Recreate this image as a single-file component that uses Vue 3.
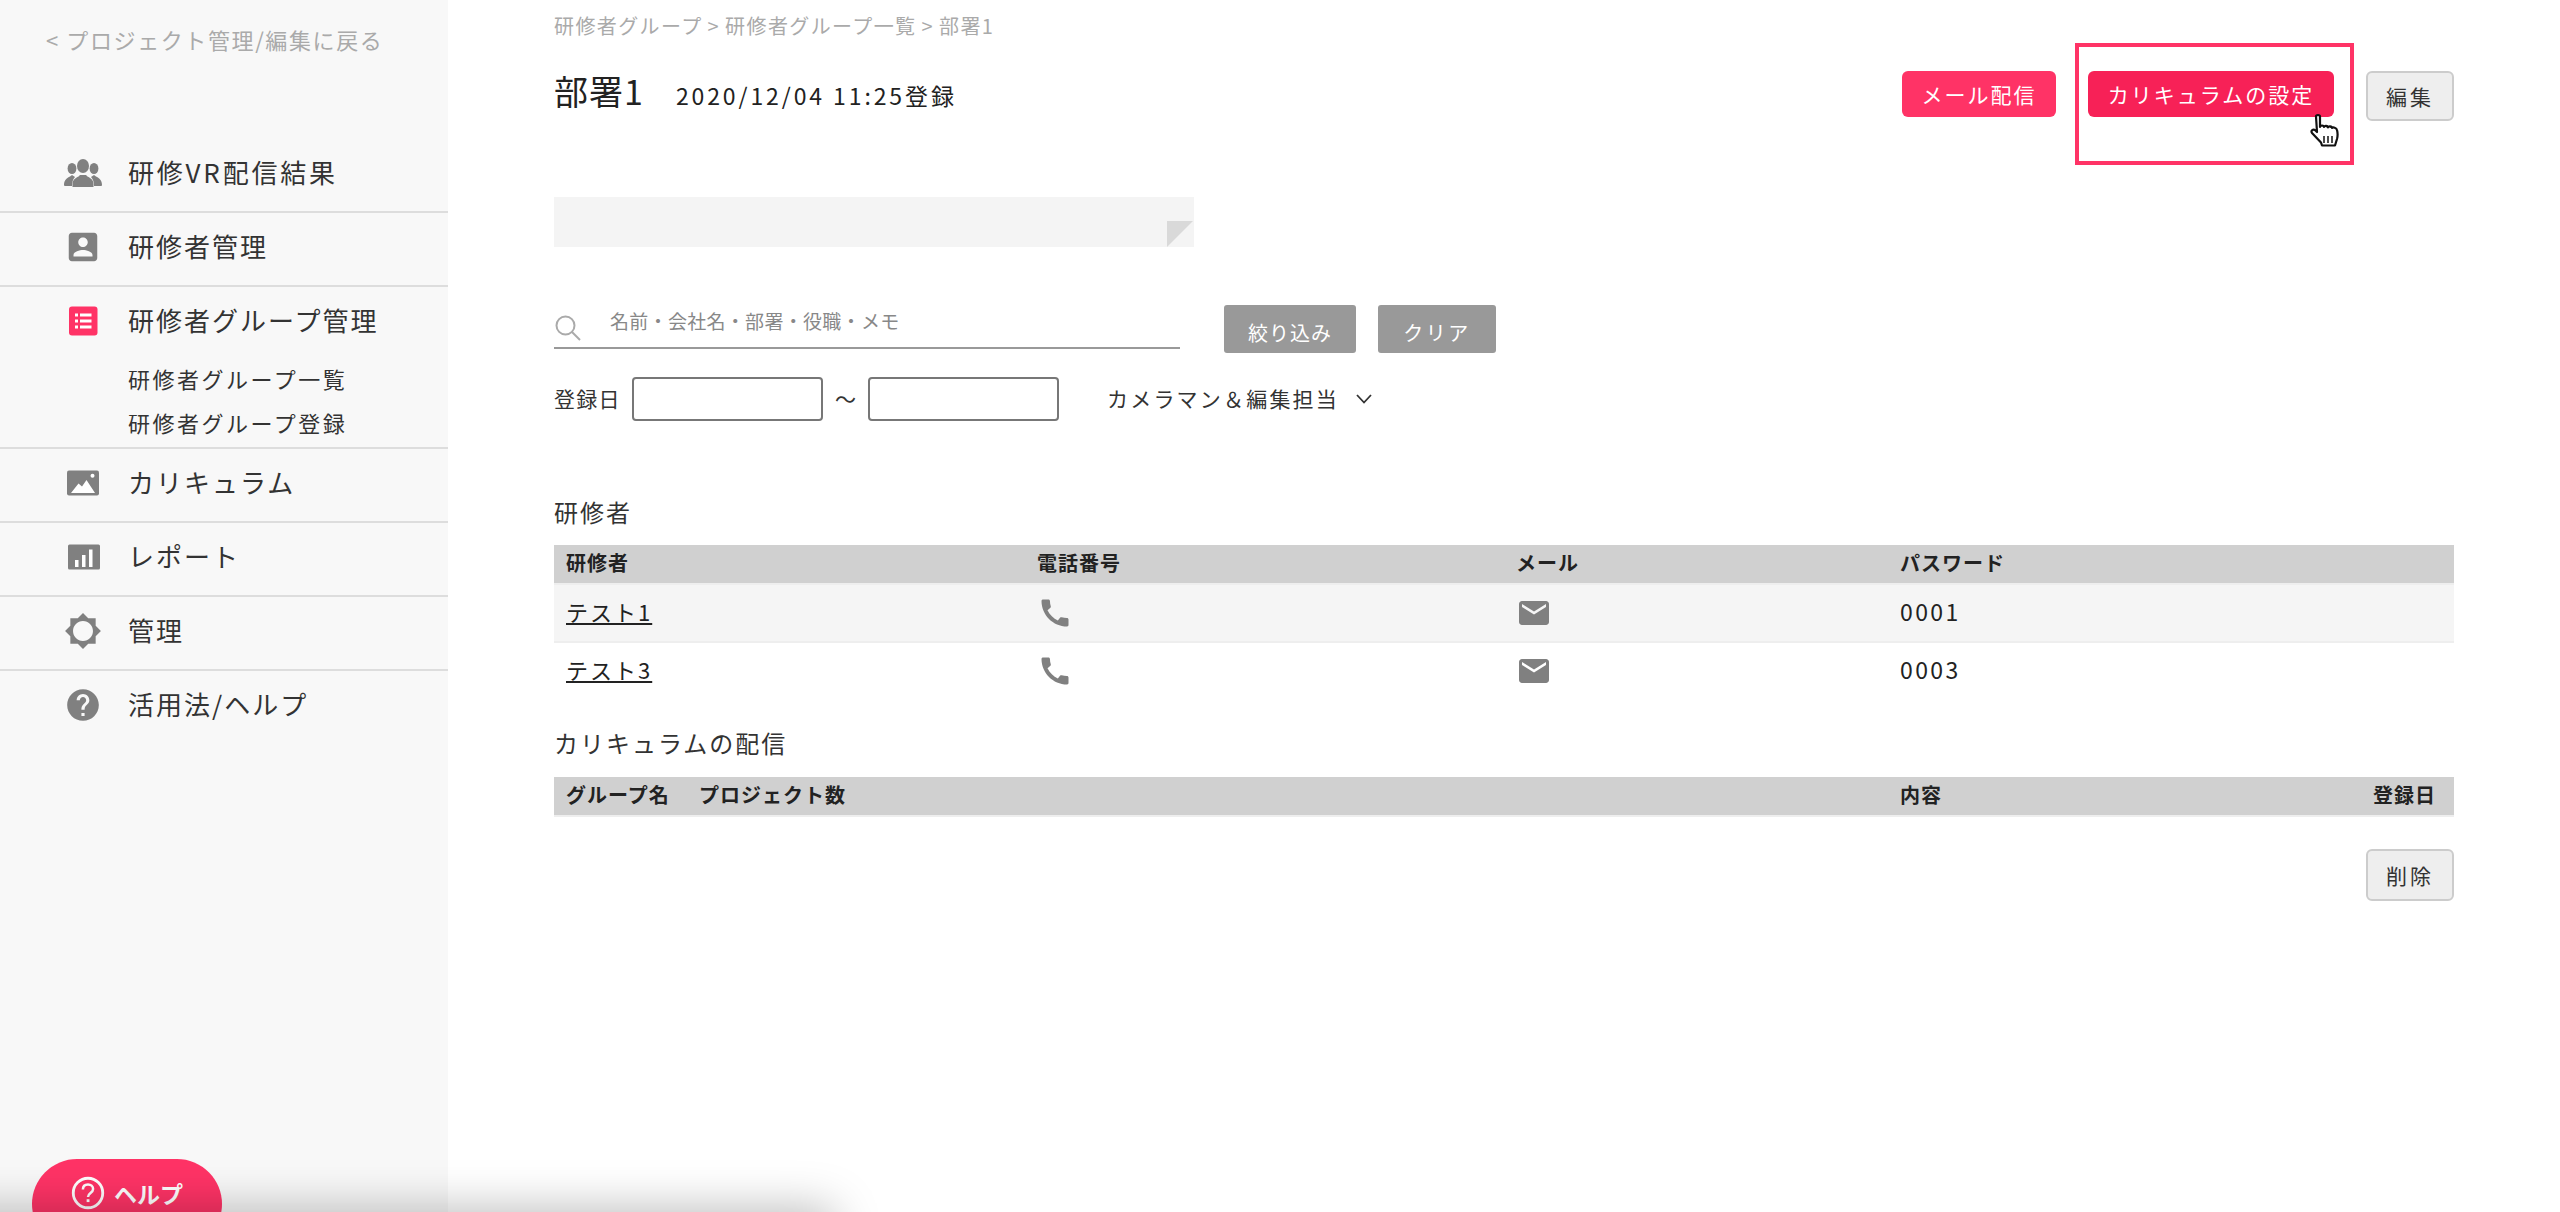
<script setup>
const navItems = [
  { label: '研修VR配信結果', icon: 'group', wide: true },
  { label: '研修者管理', icon: 'account' },
  { label: '研修者グループ管理', icon: 'list', subs: ['研修者グループ一覧', '研修者グループ登録'] },
  { label: 'カリキュラム', icon: 'image' },
  { label: 'レポート', icon: 'report' },
  { label: '管理', icon: 'gear' },
  { label: '活用法/ヘルプ', icon: 'help', last: true }
]
const trainees = [
  { name: 'テスト1', pass: '0001' },
  { name: 'テスト3', pass: '0003' }
]
</script>

<template>
  <div class="page">
    <aside class="side">
      <div class="back">&lt; プロジェクト管理/編集に戻る</div>
      <nav class="nav">
        <div v-for="item in navItems" :key="item.label" class="nav-item" :class="{ last: item.last }">
          <div class="nav-row">
            <svg v-if="item.icon === 'group'" class="nav-icon" viewBox="0 0 38 38">
              <g fill="#808080">
                <ellipse cx="8" cy="14.500" rx="4.400" ry="5.500" />
                <ellipse cx="30" cy="14.500" rx="4.400" ry="5.500" />
                <path d="M0 31c0-5 3-7 6-8.500l2-1.500 3 2c-2 2-3 5-3 9H1.500C.5 32 0 31.800 0 31zM38 31c0-5-3-7-6-8.500l-2-1.500-3 2c2 2 3 5 3 9h6.500c1 0 1.500-.2 1.500-1z" />
                <ellipse cx="19" cy="12" rx="6" ry="7" />
                <path d="M8.500 33v-3c0-4 3-6 6-7.500l1.500-1.500h6l1.500 1.500c3 1.500 6 3.500 6 7.500v3z" />
              </g>
            </svg>
            <svg v-else-if="item.icon === 'account'" class="nav-icon" viewBox="0 0 24 24">
              <path fill="#808080" d="M3 5v14c0 1.100.89 2 2 2h14c1.100 0 2-.9 2-2V5c0-1.100-.9-2-2-2H5c-1.110 0-2 .9-2 2zm12 4c0 1.660-1.340 3-3 3s-3-1.340-3-3 1.340-3 3-3 3 1.340 3 3zm-9 8c0-2 4-3.100 6-3.100s6 1.100 6 3.100v1H6v-1z" />
            </svg>
            <svg v-else-if="item.icon === 'list'" class="nav-icon" viewBox="0 0 38 38">
              <rect x="5" y="4.500" width="28.500" height="29" rx="3" fill="#ff3366" />
              <g fill="#fff">
                <rect x="11" y="11.500" width="3" height="3" />
                <rect x="16" y="11.500" width="11.500" height="3" />
                <rect x="11" y="17.500" width="3" height="3" />
                <rect x="16" y="17.500" width="11.500" height="3" />
                <rect x="11" y="23.500" width="3" height="3" />
                <rect x="16" y="23.500" width="11.500" height="3" />
              </g>
            </svg>
            <svg v-else-if="item.icon === 'image'" class="nav-icon" viewBox="0 0 38 38">
              <rect x="3" y="6.500" width="32" height="25" rx="2" fill="#808080" />
              <circle cx="28.500" cy="11.800" r="2" fill="#fff" />
              <path fill="#fff" d="M7 29l7.500-9.500 3.500 3 4.500-6.500L31 29z" />
            </svg>
            <svg v-else-if="item.icon === 'report'" class="nav-icon" viewBox="0 0 38 38">
              <rect x="4" y="6.500" width="32" height="25" rx="1.500" fill="#808080" />
              <g fill="#fff">
                <rect x="11" y="22" width="3.500" height="7" />
                <rect x="18" y="17" width="3.500" height="12" />
                <rect x="25" y="11.500" width="3.500" height="17.500" />
              </g>
            </svg>
            <svg v-else-if="item.icon === 'gear'" class="nav-icon" viewBox="0 0 24 24">
              <path fill="#808080" fill-rule="evenodd" d="M20 8.690V4h-4.690L12 .69 8.690 4H4v4.690L.69 12 4 15.310V20h4.690L12 23.310 15.310 20H20v-4.690L23.310 12 20 8.690zM12 18.300c-3.480 0-6.300-2.820-6.300-6.300s2.820-6.300 6.300-6.300 6.300 2.820 6.300 6.300-2.820 6.300-6.300 6.300z" />
            </svg>
            <svg v-else class="nav-icon" viewBox="0 0 24 24">
              <path fill="#808080" d="M12 2C6.480 2 2 6.480 2 12s4.480 10 10 10 10-4.480 10-10S17.520 2 12 2zm1 17h-2v-2h2v2zm2.070-7.750l-.9.920C13.450 12.900 13 13.500 13 15h-2v-.5c0-1.100.45-2.100 1.170-2.830l1.240-1.260c.37-.36.59-.86.59-1.410 0-1.100-.9-2-2-2s-2 .9-2 2H8c0-2.210 1.790-4 4-4s4 1.790 4 4c0 .88-.36 1.680-.93 2.250z" />
            </svg>
            <span class="nav-label" :class="{ wide: item.wide }">{{ item.label }}</span>
          </div>
          <div v-for="s in item.subs" :key="s" class="nav-sub">{{ s }}</div>
        </div>
      </nav>
      <button class="help">
        <svg class="help-icon" viewBox="0 0 30 30">
          <circle cx="15" cy="15" r="13" fill="none" stroke="#fff" stroke-width="2.500" />
          <path d="M10.500 12c0-3 2-4.500 4.500-4.500s4.500 1.500 4.500 4c0 3.500-4.500 3.500-4.500 7" fill="none" stroke="#fff" stroke-width="2.200" />
          <rect x="13.800" y="20.500" width="2.500" height="2.500" fill="#fff" />
        </svg>
        <span>ヘルプ</span>
      </button>
    </aside>

    <main class="main">
      <div class="crumb">研修者グループ<span class="sep">&gt;</span>研修者グループ一覧<span class="sep">&gt;</span>部署1</div>

      <header class="head">
        <div class="title-wrap">
          <h1 class="title">部署1</h1>
          <span class="date">2020/12/04 11:25登録</span>
        </div>
        <div class="actions">
          <button class="btn pink mail-btn">メール配信</button>
          <div class="focus">
            <button class="btn pink-dark">カリキュラムの設定</button>
            <svg class="hand" viewBox="0 0 32 34">
              <path fill="#fff" stroke="#111" stroke-width="2.200" stroke-linejoin="round" d="M6 2.500C6 .5 10 .5 10 2.500V13c0-2 4-2 4 0 0-1.500 4-1.500 4 .5 0-1.500 4-1.500 4 .5 1-1 4.500-.5 5 2 .8 3 .8 6 0 9l-2 6.500H12l-1-3L2 19c-1.500-2.500 1-4.500 3.500-2.500L7 18z" />
              <path stroke="#111" stroke-width="1.500" d="M14 22v7M18 22v7M22 22v7" />
            </svg>
          </div>
          <button class="btn ghost edit-btn">編集</button>
        </div>
      </header>

      <div class="note"><div class="fold"></div></div>

      <div class="search-row">
        <div class="search">
          <svg class="search-icon" viewBox="0 0 28 26">
            <circle cx="11.500" cy="10.500" r="9" fill="none" stroke="#aaa" stroke-width="2" />
            <path d="M18 17l8 8" stroke="#aaa" stroke-width="2" />
          </svg>
          <span class="placeholder">名前・会社名・部署・役職・メモ</span>
        </div>
        <button class="btn grey narrow-a">絞り込み</button>
        <button class="btn grey narrow-b">クリア</button>
      </div>

      <div class="date-row">
        <span class="date-label">登録日</span>
        <input class="date-input" type="text" />
        <span class="tilde">～</span>
        <input class="date-input" type="text" />
        <span class="staff">カメラマン＆編集担当</span>
        <svg class="chev" viewBox="0 0 16 10">
          <path d="M1 1l7 7.500L15 1" fill="none" stroke="#333" stroke-width="1.800" />
        </svg>
      </div>

      <h2 class="sec first">研修者</h2>
      <div class="grid thead t1">
        <div>研修者</div><div>電話番号</div><div>メール</div><div>パスワード</div>
      </div>
      <div v-for="(t, i) in trainees" :key="t.name" class="grid trow t1" :class="{ odd: i === 0 }">
        <div class="tcell"><a class="link">{{ t.name }}</a></div>
        <div class="icell">
          <svg class="cell-icon" viewBox="0 0 24 24">
            <path fill="#808080" d="M20.010 15.380c-1.230 0-2.420-.2-3.530-.56-.35-.12-.74-.03-1.010.24l-1.570 1.970c-2.830-1.350-5.480-3.900-6.890-6.830l1.950-1.660c.27-.28.35-.67.24-1.020-.37-1.110-.56-2.300-.56-3.530 0-.54-.45-.99-.99-.99H4.190C3.650 3 3 3.240 3 3.990 3 13.280 10.730 21 20.010 21c.71 0 .99-.63.99-1.180v-3.450c0-.54-.45-.99-.98-.99z" />
          </svg>
        </div>
        <div class="icell">
          <svg class="cell-icon" viewBox="0 0 24 24">
            <path fill="#808080" d="M20 4H4c-1.100 0-1.990.9-1.990 2L2 18c0 1.100.9 2 2 2h16c1.100 0 2-.9 2-2V6c0-1.100-.9-2-2-2zm0 4l-8 5-8-5V6l8 5 8-5v2z" />
          </svg>
        </div>
        <div class="tcell pass">{{ t.pass }}</div>
      </div>

      <h2 class="sec second">カリキュラムの配信</h2>
      <div class="grid thead t2">
        <div>グループ名</div><div>プロジェクト数</div><div>内容</div><div class="right">登録日</div>
      </div>

      <div class="del-row">
        <button class="btn ghost del-btn">削除</button>
      </div>
    </main>

    <div class="edge"></div>
  </div>
</template>

<style>
html, body { margin: 0; background: #fff; overflow: hidden; }
</style>

<style scoped>
.page {
  position: relative;
  display: flex;
  width: 2560px;
  height: 1212px;
  overflow: hidden;
  background: #fff;
  color: #333;
  font-family: "Noto Sans CJK JP", "Noto Sans", sans-serif;
}
.side {
  position: relative;
  flex: 0 0 448px;
  background: #f8f8f8;
}
.back {
  padding: 24px 0 0 46px;
  height: 34px;
  line-height: 30px;
  font-size: 22px;
  letter-spacing: 1.600px;
  color: #aaa;
}
.nav { margin-top: 81px; }
.nav-item {
  padding-bottom: 4px;
  border-bottom: 2px solid #ddd;
}
.nav-item.last { border-bottom: 0; }
.nav-row {
  display: flex;
  align-items: center;
  gap: 26px;
  height: 68px;
  padding-left: 64px;
  font-size: 26px;
  letter-spacing: 2px;
}
.nav-icon { width: 38px; height: 38px; flex: none; }
.nav-label { margin-bottom: 4px; }
.nav-label.wide { letter-spacing: 2.800px; }
.nav-sub {
  height: 44px;
  line-height: 40px;
  padding-left: 128px;
  font-size: 22px;
  letter-spacing: 2.500px;
}
.nav-row + .nav-sub { margin-top: 3px; }
.nav-sub:last-child { margin-bottom: -3px; }
.help {
  position: absolute;
  left: 32px;
  top: 1159px;
  width: 190px;
  height: 90px;
  padding: 0 0 22px;
  border: 0;
  border-radius: 45px;
  background: #ff3366;
  color: #fff;
  font: 700 23px "Noto Sans CJK JP", sans-serif;
  display: flex;
  align-items: center;
  justify-content: center;
  gap: 9px;
}
.help-icon { width: 34px; height: 34px; }
.main {
  flex: 1;
  padding: 14px 106px 0;
  min-width: 0;
}
.crumb {
  font-size: 20px;
  line-height: 24px;
  letter-spacing: 1.400px;
  color: #aaa;
}
.sep { margin: 0 5px; }
.head {
  display: flex;
  justify-content: space-between;
  margin-top: 33px;
  height: 50px;
}
.title-wrap { display: flex; align-items: baseline; height: 46px; margin-top: -3px; }
.title {
  margin: 0;
  font-size: 34px;
  font-weight: 400;
  line-height: 46px;
  letter-spacing: 1px;
  color: #222;
}
.date {
  margin-left: 32px;
  font-size: 23px;
  letter-spacing: 2.900px;
  color: #222;
}
.actions { display: flex; align-items: flex-start; }
.btn {
  box-sizing: border-box;
  border: 0;
  padding: 0;
  font-family: inherit;
  display: block;
  text-align: center;
}
.pink, .pink-dark {
  height: 46px;
  border-radius: 6px;
  color: #fff;
  font-size: 21px;
  letter-spacing: 2px;
}
.pink { background: #ff3366; }
.pink-dark { background: #f72157; width: 246px; position: relative; }
.mail-btn { width: 154px; margin-right: 32px; }
.focus { position: relative; margin-right: 32px; }
.focus::before {
  content: "";
  position: absolute;
  left: -13px;
  top: -28px;
  width: 279px;
  height: 122px;
  box-sizing: border-box;
  border: 4px solid #ff3366;
}
.hand {
  position: absolute;
  left: 222px;
  top: 42px;
  width: 32px;
  height: 36px;
}
.ghost {
  width: 88px;
  background: #eee;
  border: 2px solid #ccc;
  border-radius: 6px;
  color: #333;
  font-size: 21px;
  letter-spacing: 3px;
}
.edit-btn { height: 50px; }
.note {
  position: relative;
  margin-top: 76px;
  width: 640px;
  height: 50px;
  background: #f4f4f4;
}
.fold {
  position: absolute;
  right: 1px;
  bottom: 0;
  width: 26px;
  height: 26px;
  background: #d9d9d9;
  clip-path: polygon(0 0, 100% 0, 0 100%);
}
.search-row {
  display: flex;
  align-items: flex-start;
  margin-top: 58px;
  height: 48px;
}
.search {
  box-sizing: border-box;
  display: flex;
  align-items: center;
  width: 626px;
  height: 44px;
  border-bottom: 2px solid #999;
  margin-right: 44px;
}
.search-icon { width: 28px; height: 26px; margin-top: 3px; }
.placeholder {
  margin: -12px 0 0 28px;
  font-size: 19px;
  letter-spacing: .3px;
  color: #888;
}
.grey {
  height: 48px;
  background: #999;
  color: #fff;
  border-radius: 3px;
  font-size: 20px;
  letter-spacing: 1px;
  padding-top: 6px;
}
.narrow-a { width: 132px; margin-right: 22px; }
.narrow-b { width: 118px; letter-spacing: 2.500px; }
.date-row {
  display: flex;
  align-items: center;
  margin-top: 24px;
  height: 44px;
  font-size: 21px;
}
.date-label { width: 78px; letter-spacing: 1.300px; margin-bottom: 3px; }
.date-input {
  box-sizing: border-box;
  width: 191px;
  height: 44px;
  border: 2px solid #777;
  border-radius: 4px;
  background: #fff;
  padding: 0;
}
.tilde { width: 45px; text-align: center; margin-bottom: 3px; }
.staff { margin-left: 48px; width: 249px; letter-spacing: 2.200px; margin-bottom: 3px; }
.chev { width: 16px; height: 10px; }
.sec {
  margin: 0;
  font-size: 24px;
  line-height: 24px;
  padding-bottom: 6px;
  font-weight: 400;
  letter-spacing: 2px;
}
.sec.first { margin-top: 79px; }
.sec.second { margin-top: 30px; }
.grid { display: grid; align-items: center; }
.grid > div:first-child { padding-left: 12px; }
.t1 { grid-template-columns: 483px 479px 384px 1fr; }
.t2 { grid-template-columns: 145px 1201px 300px 1fr; }
.thead {
  height: 38px;
  background: #d0d0d0;
  border-bottom: 2px solid #eee;
  font-size: 20px;
  font-weight: 700;
  letter-spacing: 1px;
  color: #222;
}
.thead > div { margin-bottom: 3px; }
.sec + .thead { margin-top: 15px; }
.sec.second + .thead { margin-top: 16px; }
.right { text-align: right; padding-right: 18px; }
.trow {
  height: 56px;
  border-bottom: 2px solid #fff;
  font-size: 22px;
  letter-spacing: 2px;
}
.trow.odd { background: #f5f5f5; border-bottom-color: #eee; }
.tcell { margin-bottom: 5px; }
.link { text-decoration: underline; color: #222; }
.icell { display: flex; }
.cell-icon { width: 36px; height: 36px; display: block; }
.pass { color: #222; font-size: 23px; letter-spacing: 2.400px; }
.del-row { display: flex; justify-content: flex-end; margin-top: 32px; }
.del-btn { height: 52px; }
.edge {
  position: absolute;
  left: -80px;
  top: 1222px;
  width: 900px;
  height: 40px;
  box-shadow: 0 0 46px 14px rgba(0, 0, 0, .26);
  pointer-events: none;
}
</style>
